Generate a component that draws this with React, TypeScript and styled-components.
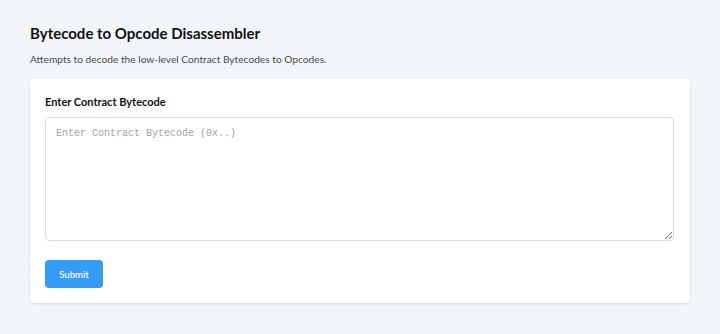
import React from "react";
import styled, { createGlobalStyle } from "styled-components";

const Global = createGlobalStyle`
  html, body { margin: 0; padding: 0; background: #f3f6f9; }
  body { font-family: Lato, "Noto Sans", sans-serif; color: #111; }
  * { box-sizing: border-box; }
`;

const Page = styled.div`
  padding: 22px 30px 30px 30px;
  display: flex;
  flex-direction: column;
  width: 720px;
`;

const Title = styled.h1`
  margin: 0;
  font-size: 15px;
  line-height: 22px;
  font-weight: 700;
  color: #111;
`;

const Subtitle = styled.p`
  margin: 7px 0 0 0;
  font-size: 10.2px;
  line-height: 16px;
  color: #4a4a4a;
`;

const Card = styled.div`
  margin-top: 12px;
  background: #fff;
  border-radius: 4px;
  box-shadow: 0 1px 3px rgba(0, 0, 0, 0.12);
  padding: 15px 16px 15px 15px;
  display: flex;
  flex-direction: column;
  width: 660px;
`;

const Label = styled.label`
  font-size: 11px;
  line-height: 16px;
  font-weight: 700;
  color: #111;
`;

const Area = styled.textarea`
  margin-top: 7px;
  height: 124px;
  width: 100%;
  border: 1px solid #dcdcdc;
  border-radius: 4px;
  padding: 10px;
  font-family: "Liberation Mono", monospace;
  font-size: 10px;
  resize: vertical;
  outline: none;
  &::placeholder { color: #a3a3a3; }
`;

const Button = styled.button`
  margin-top: 19px;
  align-self: flex-start;
  width: 58px;
  height: 28px;
  background: #349cf9;
  color: #fff;
  border: none;
  border-radius: 4px;
  font-family: Lato, sans-serif;
  font-size: 9.5px;
  font-weight: 600;
`;

export default function App() {
  return (
    <>
      <Global />
      <Page>
        <Title>Bytecode to Opcode Disassembler</Title>
        <Subtitle>Attempts to decode the low-level Contract Bytecodes to Opcodes.</Subtitle>
        <Card>
          <Label>Enter Contract Bytecode</Label>
          <Area placeholder="Enter Contract Bytecode (0x..)" />
          <Button>Submit</Button>
        </Card>
      </Page>
    </>
  );
}
